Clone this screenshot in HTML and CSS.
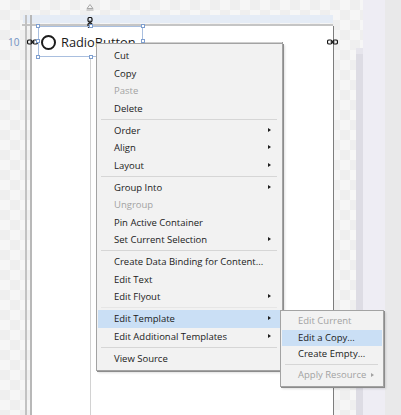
FILE: index.html
```html
<!DOCTYPE html>
<html>
<head>
<meta charset="utf-8">
<link rel="stylesheet" href="styles.css">
</head>
<body>
<div class="screen">
  <div class="workspace">
    <svg class="ruler-mark" width="8" height="7" viewBox="0 0 8 7"><path d="M4 0.5 L7 4.5 L1 4.5 Z M0.5 6 H7.5" fill="none" stroke="#a9a9a9" stroke-width="1"/></svg>
    <div class="band"></div>
    <div class="topline"></div>
    <div class="edge e1"></div>
    <div class="edge e2"></div>
    <div class="artboard"></div>
    <div class="col-line"></div>
    <div class="inner-top"></div>
    <div class="inner-right"></div>
    <span class="margin-num">10</span>
    <svg class="link link-top" width="6" height="11" viewBox="0 0 6 11"><rect x="1" y="0.5" width="4" height="4.5" rx="1.5" fill="none" stroke="#111" stroke-width="1.2"/><rect x="1" y="6" width="4" height="4.5" rx="1.5" fill="none" stroke="#111" stroke-width="1.2"/><path d="M3 3.5 V7.5" stroke="#111" stroke-width="1.2"/></svg>
    <svg class="link link-left" width="11" height="6" viewBox="0 0 11 6"><rect x="0.5" y="1" width="4.5" height="4" rx="1.5" fill="none" stroke="#111" stroke-width="1.2"/><rect x="6" y="1" width="4.5" height="4" rx="1.5" fill="none" stroke="#111" stroke-width="1.2"/><path d="M3.5 3 H7.5" stroke="#111" stroke-width="1.2"/></svg>
    <svg class="link link-right" width="11" height="6" viewBox="0 0 11 6"><rect x="0.5" y="1" width="4.5" height="4" rx="1.5" fill="none" stroke="#111" stroke-width="1.2"/><rect x="6" y="1" width="4.5" height="4" rx="1.5" fill="none" stroke="#111" stroke-width="1.2"/><path d="M3.5 3 H7.5" stroke="#111" stroke-width="1.2"/></svg>
    <div class="radio">
      <span class="radio-dot"></span>
      <span class="radio-label">RadioButton</span>
    </div>
    <div class="selection">
      <span class="h tl"></span><span class="h tm"></span><span class="h tr"></span>
      <span class="h ml"></span><span class="h mr"></span>
      <span class="h bl"></span><span class="h bm"></span><span class="h br"></span>
    </div>
  </div>
  <div class="scroll-col"><div class="thumb"></div></div>
  <div class="pane-lav"></div>
  <div class="pane-gray"></div>

  <div class="menu context">
    <div class="item">Cut</div>
    <div class="item">Copy</div>
    <div class="item disabled">Paste</div>
    <div class="item">Delete</div>
    <div class="sep"></div>
    <div class="item sub">Order</div>
    <div class="item sub">Align</div>
    <div class="item sub">Layout</div>
    <div class="sep"></div>
    <div class="item sub">Group Into</div>
    <div class="item disabled">Ungroup</div>
    <div class="item">Pin Active Container</div>
    <div class="item sub">Set Current Selection</div>
    <div class="sep"></div>
    <div class="item">Create Data Binding for Content...</div>
    <div class="item">Edit Text</div>
    <div class="item sub">Edit Flyout</div>
    <div class="sep faint"></div>
    <div class="item sub active">Edit Template</div>
    <div class="item sub">Edit Additional Templates</div>
    <div class="sep"></div>
    <div class="item">View Source</div>
  </div>

  <div class="menu submenu">
    <div class="item disabled">Edit Current</div>
    <div class="item active">Edit a Copy...</div>
    <div class="item">Create Empty...</div>
    <div class="sep"></div>
    <div class="item sub disabled">Apply Resource</div>
  </div>
</div>
</body>
</html>
```

FILE: styles.css
```css
* { box-sizing: border-box; }
html, body { margin: 0; padding: 0; }
body {
  width: 401px;
  height: 415px;
  overflow: hidden;
  font-family: "Open Sans", "Noto Sans", sans-serif;
}
.screen {
  position: relative;
  width: 401px;
  height: 415px;
  display: flex;
  background-color: #f6f6f6;
  background-image:
    linear-gradient(45deg, #efefef 25%, transparent 25%, transparent 75%, #efefef 75%),
    linear-gradient(45deg, #efefef 25%, transparent 25%, transparent 75%, #efefef 75%);
  background-size: 20px 20px;
  background-position: 0 0, 10px 10px;
}
.workspace {
  position: relative;
  width: 356px;
  height: 415px;
  flex: none;
}
.scroll-col {
  width: 7px;
  flex: none;
  padding-top: 48px;
}
.thumb {
  height: 100%;
  background: #dddce4;
  border-top: 6px solid #e6e5ec;
}
.pane-lav {
  width: 22px;
  flex: none;
  background: #eeedf4;
}
.pane-gray {
  flex: 1;
  background: #e9e9ea;
}

/* design surface items */
.ruler-mark { position: absolute; left: 86px; top: 4px; }
.band {
  position: absolute; left: 23px; top: 15px; width: 310px; height: 8px;
  background: #e5ecf6;
}
.topline {
  position: absolute; left: 22px; top: 24px; width: 311px; height: 2px;
  background: #c5c5c5;
}
.edge {
  position: absolute; top: 15px; bottom: 0; width: 2px; background: #c2c2c2;
}
.e1 { left: 25px; }
.e2 { left: 30px; width: 2px; background: #b8b8b8; }
.artboard {
  position: absolute; left: 32px; top: 26px; width: 302px; bottom: 0;
  background: #ffffff;
  border-right: 1px solid #7d7d7d;
}
.col-line {
  position: absolute; left: 90px; top: 56px; bottom: 0; width: 1px; background: #d2d2d2;
}
.inner-top {
  position: absolute; left: 143px; top: 42px; width: 140px; height: 1px; background: #cfcfcf;
}
.inner-right {
  position: absolute; left: 282px; top: 42px; height: 270px; width: 1px; background: #9a9a9a;
}
.margin-num {
  position: absolute; left: 8px; top: 36px;
  font-size: 10px; color: #6f90c2; line-height: 12px;
}
.link { position: absolute; }
.link-top { left: 87px; top: 17px; }
.link-left { left: 27px; top: 39px; }
.link-right { left: 327px; top: 39px; }

.radio {
  position: absolute; left: 41px; top: 34px;
  display: flex; align-items: center; gap: 5px;
}
.radio-dot {
  width: 15px; height: 15px; border-radius: 50%;
  border: 2px solid #1c1c1c; background: #fff;
}
.radio-label {
  font-size: 12.8px; color: #1a1a1a; line-height: 16px;
}
.selection {
  position: absolute; left: 38px; top: 26px; width: 105px; height: 31px;
  border: 1px solid #a9bfdf;
}
.h {
  position: absolute; width: 4px; height: 4px;
  background: #fff; border: 1px solid #7f9fcf;
}
.tl { left: -3px; top: -3px; }
.tm { left: 50px; top: -3px; }
.tr { right: -3px; top: -3px; }
.ml { left: -3px; top: 12px; }
.mr { right: -3px; top: 12px; }
.bl { left: -3px; bottom: -3px; }
.bm { left: 50px; bottom: -3px; }
.br { right: -3px; bottom: -3px; }

/* menus */
.menu {
  position: absolute;
  background: #f2f2f2;
  border: 1px solid #a3a3a3;
  box-shadow: 1px 1px 0 #8c8c8c, 2px 2px 2px rgba(0,0,0,0.12);
  display: flex; flex-direction: column;
  padding: 3px 1px;
  font-size: 9.5px;
  color: #1a1a1a;
}
.context { left: 96px; top: 43px; width: 187px; }
.submenu { left: 280px; top: 310px; width: 104px; padding: 2px 1px; }
.item {
  position: relative;
  height: 17.5px;
  line-height: 17.5px;
  padding-left: 16px;
  white-space: nowrap;
}
.submenu .item { height: 16.5px; line-height: 16.5px; }
.item.disabled { color: #a2a2a2; }
.item.active { background: #cadff5; }
.item.sub::after {
  content: "";
  position: absolute;
  right: 10px; top: 50%;
  margin-top: -2.5px;
  border-left: 3px solid #1e1e1e;
  border-top: 2.5px solid transparent;
  border-bottom: 2.5px solid transparent;
}
.submenu .item.sub::after { right: 8px; }
.item.sub.disabled::after { border-left-color: #a2a2a2; }
.sep {
  height: 4.5px;
  margin: 0 4px 0 3px;
  display: flex; align-items: center;
}
.sep::before {
  content: ""; flex: 1; height: 1px; background: #d6d6d6;
}
.sep.faint::before { background: #e6e6e6; }
```
